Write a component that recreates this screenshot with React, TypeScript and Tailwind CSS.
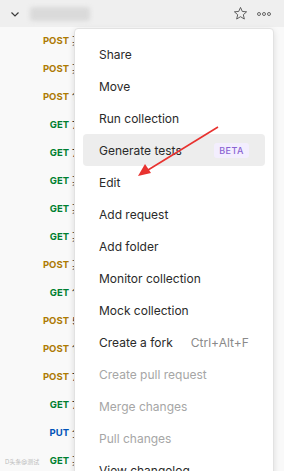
import React from "react";

const rows: { m: string; n: string }[] = [
  { m: "POST", n: "某" },
  { m: "POST", n: "某" },
  { m: "POST", n: "1" },
  { m: "GET", n: "7" },
  { m: "GET", n: "7" },
  { m: "GET", n: "某" },
  { m: "GET", n: "某" },
  { m: "GET", n: "某" },
  { m: "POST", n: "某" },
  { m: "GET", n: "1" },
  { m: "POST", n: "5" },
  { m: "POST", n: "1" },
  { m: "POST", n: "7" },
  { m: "GET", n: "7" },
  { m: "PUT", n: "全" },
  { m: "GET", n: "某" },
];

const methodColor: Record<string, string> = {
  POST: "text-[#ad7a03]",
  GET: "text-[#007f31]",
  PUT: "text-[#0053b8]",
};

const items: { label: string; disabled?: boolean; active?: boolean; badge?: string; shortcut?: string }[] = [
  { label: "Share" },
  { label: "Move" },
  { label: "Run collection" },
  { label: "Generate tests", active: true, badge: "BETA" },
  { label: "Edit" },
  { label: "Add request" },
  { label: "Add folder" },
  { label: "Monitor collection" },
  { label: "Mock collection" },
  { label: "Create a fork", shortcut: "Ctrl+Alt+F" },
  { label: "Create pull request", disabled: true },
  { label: "Merge changes", disabled: true },
  { label: "Pull changes", disabled: true },
  { label: "View changelog" },
];

export default function App() {
  return (
    <div
      className="relative w-[284px] h-[471px] overflow-hidden bg-[#f9f9f9]"
      style={{ fontFamily: "Inter, 'Noto Sans CJK SC', sans-serif" }}
    >
      {/* header */}
      <div className="flex items-center h-[27px] bg-[#efefef] pl-[10px] pr-[13px]">
        <svg width="10" height="10" viewBox="0 0 10 10" className="text-[#3a3a3a]">
          <path d="M1.5 3.5 L5 7 L8.5 3.5" fill="none" stroke="currentColor" strokeWidth="1.2" />
        </svg>
        <div className="ml-[10px] h-[14px] w-[60px] rounded-[3px] bg-[#dadada] blur-[2px]" />
        <div className="flex-1" />
        <svg width="15" height="15" viewBox="0 0 16 16" className="text-[#555]">
          <path
            d="M8 1.5 L9.9 5.8 L14.5 6.2 L11 9.3 L12.1 13.9 L8 11.4 L3.9 13.9 L5 9.3 L1.5 6.2 L6.1 5.8 Z"
            fill="none"
            stroke="currentColor"
            strokeWidth="1"
            strokeLinejoin="round"
          />
        </svg>
        <div className="ml-[9px] flex gap-[1px]">
          <span className="block w-[4px] h-[4px] rounded-full border border-[#666]" />
          <span className="block w-[4px] h-[4px] rounded-full border border-[#666]" />
          <span className="block w-[4px] h-[4px] rounded-full border border-[#666]" />
        </div>
      </div>

      {/* list */}
      <div className="flex flex-col">
        {rows.map((r, i) => (
          <div key={i} className="flex items-center h-[28px]">
            <div className={`w-[69px] text-right text-[9.5px] font-bold ${methodColor[r.m]}`}>{r.m}</div>
            <div className="ml-[3px] text-[11px] text-[#333]">{r.n}</div>
          </div>
        ))}
      </div>

      {/* watermark */}
      <div className="absolute left-[5px] top-[457px] text-[6px] text-[#bbbbbb] whitespace-nowrap">
        D头条@测试
      </div>

      {/* menu */}
      <div className="absolute left-[74px] top-[28px] w-[200px] h-[460px] bg-white border border-[#e2e2e2] rounded-[4px] shadow-[0_2px_6px_rgba(0,0,0,0.12)] pt-[9px] px-[8px]">
        {items.map((it, i) => (
          <div
            key={i}
            className={`flex items-center h-[32px] pl-[16px] pr-[16px] rounded-[4px] text-[12px] whitespace-nowrap ${
              it.active ? "bg-[#ededed]" : ""
            } ${it.disabled ? "text-[#a6a6a6]" : "text-[#2a2a2a]"}`}
          >
            <span className="pt-[1px]">{it.label}</span>
            {it.badge && (
              <span className="ml-auto px-[5px] h-[15px] leading-[15px] rounded-[3px] bg-[#f3eefe] text-[#8a63d2] text-[9px] font-medium tracking-[0.5px]">
                {it.badge}
              </span>
            )}
            {it.shortcut && <span className="ml-[18px] pt-[1px] text-[#8a8a8a]">{it.shortcut}</span>}
          </div>
        ))}
      </div>

      {/* red arrow annotation */}
      <svg className="absolute left-0 top-0 pointer-events-none" width="284" height="471">
        <line x1="218" y1="127" x2="148" y2="170" stroke="#e8322f" strokeWidth="1.6" />
        <polygon points="138,176 145,164 151,173" fill="#e8322f" />
      </svg>
    </div>
  );
}
